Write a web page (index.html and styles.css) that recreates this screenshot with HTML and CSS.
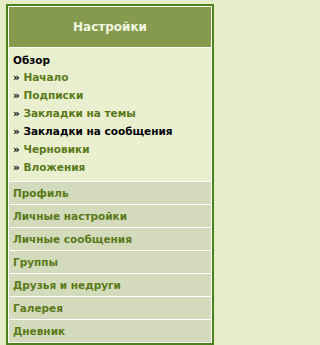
FILE: index.html
```html
<!DOCTYPE html>
<html lang="ru">
<head>
<meta charset="utf-8">
<link rel="stylesheet" href="styles.css">
</head>
<body>
<div class="panel">
  <div class="panel-head">Настройки</div>
  <div class="overview">
    <div class="overview-title">Обзор</div>
    <ul class="sublist">
      <li><span class="raquo">»</span> <a href="#">Начало</a></li>
      <li><span class="raquo">»</span> <a href="#">Подписки</a></li>
      <li><span class="raquo">»</span> <a href="#">Закладки на темы</a></li>
      <li class="active"><span class="raquo">»</span> <a href="#">Закладки на сообщения</a></li>
      <li><span class="raquo">»</span> <a href="#">Черновики</a></li>
      <li><span class="raquo">»</span> <a href="#">Вложения</a></li>
    </ul>
  </div>
  <a class="row" href="#">Профиль</a>
  <a class="row" href="#">Личные настройки</a>
  <a class="row" href="#">Личные сообщения</a>
  <a class="row" href="#">Группы</a>
  <a class="row" href="#">Друзья и недруги</a>
  <a class="row" href="#">Галерея</a>
  <a class="row" href="#">Дневник</a>
</div>
</body>
</html>
```

FILE: styles.css
```css
html, body {
  margin: 0;
  padding: 0;
  background: #e6ecc8;
}

body {
  font-family: "DejaVu Sans", Verdana, sans-serif;
  font-size: 10.5px;
  font-weight: bold;
}

.panel {
  margin: 4px 0 0 6px;
  width: 202px;
  border: 2px solid #4c821e;
  background: #ffffff;
  padding: 1px;
  display: flex;
  flex-direction: column;
  gap: 1px;
}

.panel-head {
  height: 40px;
  background: #869a4e;
  color: #f2f6e2;
  font-size: 12px;
  display: flex;
  align-items: center;
  justify-content: center;
}

.overview {
  background: #e9efcf;
  padding: 4px 4px 5px 4px;
}

.overview-title {
  color: #000000;
  line-height: 16px;
}

.sublist {
  list-style: none;
  margin: 0;
  padding: 0;
}

.sublist li {
  line-height: 18px;
}

.raquo {
  color: #000000;
}

.sublist a {
  color: #5a7a18;
  text-decoration: none;
}

.sublist li.active a {
  color: #000000;
}

.row {
  display: flex;
  align-items: center;
  height: 22px;
  padding-left: 4px;
  background: #d4dbbc;
  color: #5a7a18;
  text-decoration: none;
}
```
